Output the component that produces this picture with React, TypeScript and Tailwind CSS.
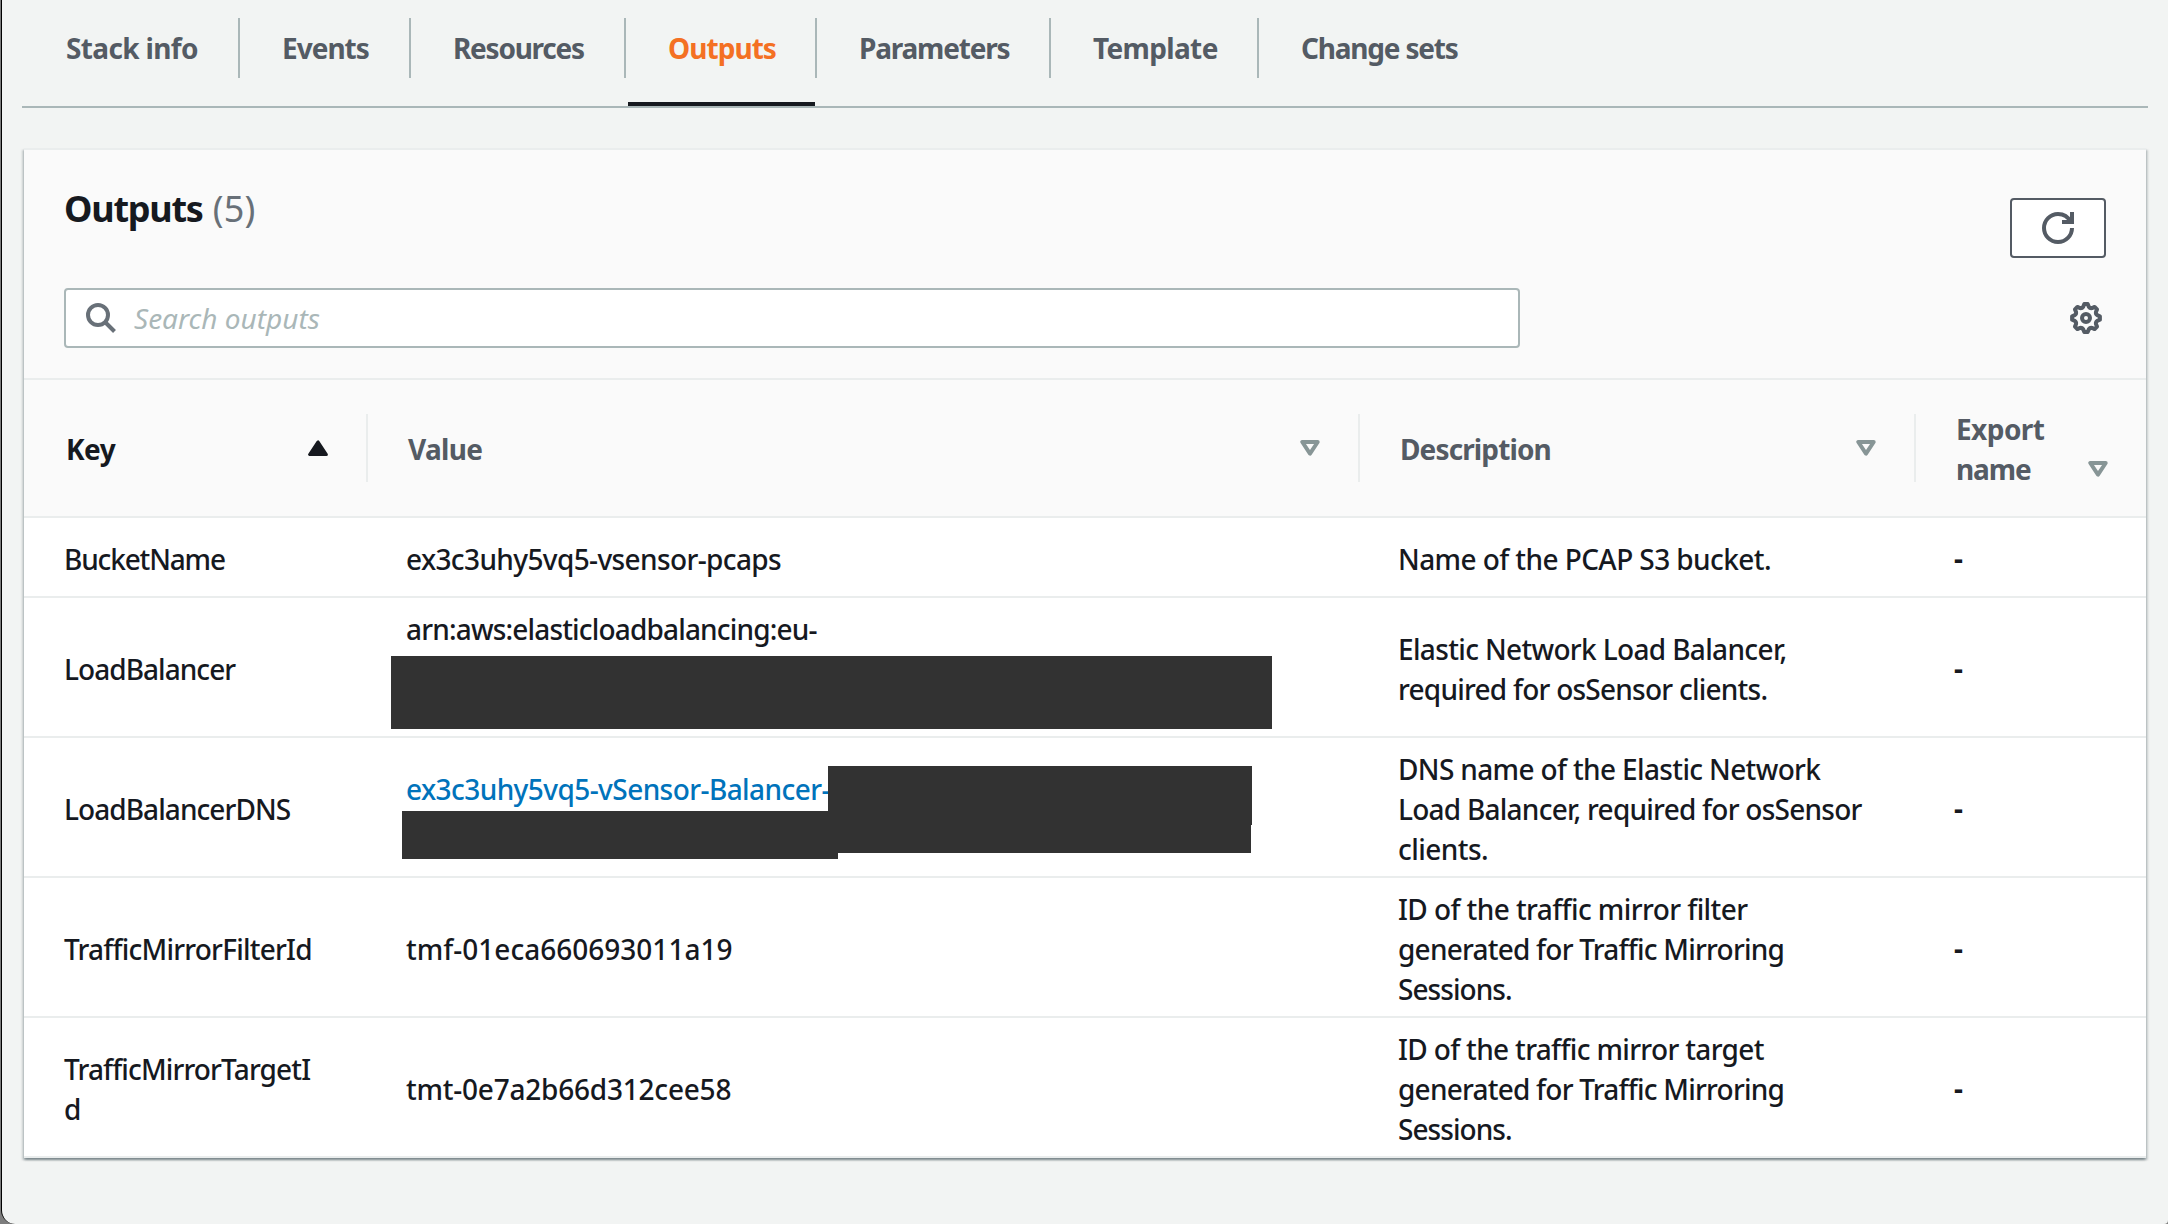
import type { ReactNode } from "react";

type Line = { text: string; track: string };

const tabs = [
  { label: "Stack info", box: "w-[218px] pl-[44px]", track: "tracking-[-0.65px]" },
  { label: "Events", box: "w-[171px] pl-[42px]", track: "tracking-[-1px]" },
  { label: "Resources", box: "w-[215px] pl-[42px]", track: "tracking-[-1.25px]" },
  { label: "Outputs", box: "w-[191px] pl-[42px]", track: "tracking-[-0.95px]", active: true },
  { label: "Parameters", box: "w-[234px] pl-[42px]", track: "tracking-[-1.2px]" },
  { label: "Template", box: "w-[208px] pl-[42px]", track: "tracking-[-0.65px]" },
  { label: "Change sets", box: "w-[240px] pl-[42px]", track: "tracking-[-1.2px]", last: true },
];

const rows: { key: Line[]; value: ReactNode; description: Line[]; height: string }[] = [
  {
    key: [{ text: "BucketName", track: "tracking-[-1.15px]" }],
    value: <Text line={{ text: "ex3c3uhy5vq5-vsensor-pcaps", track: "tracking-[-0.62px]" }} />,
    description: [{ text: "Name of the PCAP S3 bucket.", track: "tracking-[-0.58px]" }],
    height: "h-[80px]",
  },
  {
    key: [{ text: "LoadBalancer", track: "tracking-[-0.95px]" }],
    value: (
      <div className="relative h-[120px]">
        <Text line={{ text: "arn:aws:elasticloadbalancing:eu-", track: "tracking-[-0.83px]" }} />
        <div className="absolute left-[-15px] top-[47px] h-[73px] w-[881px] bg-[#323232]" />
      </div>
    ),
    description: [
      { text: "Elastic Network Load Balancer,", track: "tracking-[-0.65px]" },
      { text: "required for osSensor clients.", track: "tracking-[-0.76px]" },
    ],
    height: "h-[140px]",
  },
  {
    key: [{ text: "LoadBalancerDNS", track: "tracking-[-0.93px]" }],
    value: (
      <div className="relative h-[80px] text-[#0073bb]">
        <Text line={{ text: "ex3c3uhy5vq5-vSensor-Balancer-", track: "tracking-[-0.57px]" }} />
        <div className="absolute left-[422px] top-[-3px] h-[59px] w-[424px] bg-[#323232]" />
        <div className="absolute left-[422px] top-[55px] h-[29px] w-[423px] bg-[#323232]" />
        <div className="absolute left-[-4px] top-[42px] h-[48px] w-[436px] bg-[#323232]" />
      </div>
    ),
    description: [
      { text: "DNS name of the Elastic Network", track: "tracking-[-0.64px]" },
      { text: "Load Balancer, required for osSensor", track: "tracking-[-0.75px]" },
      { text: "clients.", track: "tracking-[-0.55px]" },
    ],
    height: "h-[140px]",
  },
  {
    key: [{ text: "TrafficMirrorFilterId", track: "tracking-[-0.78px]" }],
    value: <Text line={{ text: "tmf-01eca660693011a19", track: "tracking-[0.01px]" }} />,
    description: [
      { text: "ID of the traffic mirror filter", track: "tracking-[-0.58px]" },
      { text: "generated for Traffic Mirroring", track: "tracking-[-0.77px]" },
      { text: "Sessions.", track: "tracking-[-0.95px]" },
    ],
    height: "h-[140px]",
  },
  {
    key: [
      { text: "TrafficMirrorTargetI", track: "tracking-[-0.86px]" },
      { text: "d", track: "tracking-normal" },
    ],
    value: <Text line={{ text: "tmt-0e7a2b66d312cee58", track: "tracking-[-0.22px]" }} />,
    description: [
      { text: "ID of the traffic mirror target", track: "tracking-[-0.66px]" },
      { text: "generated for Traffic Mirroring", track: "tracking-[-0.77px]" },
      { text: "Sessions.", track: "tracking-[-0.95px]" },
    ],
    height: "h-[140px]",
  },
];

function Text({ line }: { line: Line }) {
  return <div className={`whitespace-nowrap leading-[40px] ${line.track}`}>{line.text}</div>;
}

function SortDown() {
  return (
    <svg className="h-4 w-5 shrink-0" viewBox="0 0 20 16" fill="none" stroke="#879596" strokeWidth="4" strokeLinejoin="round">
      <path d="M2.3 2h15.4L10 13.6z" />
    </svg>
  );
}

function SortUp() {
  return (
    <svg className="h-4 w-5 shrink-0" viewBox="0 0 20 16" fill="#16191f" stroke="#16191f" strokeWidth="3" strokeLinejoin="round">
      <path d="M1.6 14.5h16.8L10 1.9z" />
    </svg>
  );
}

const gear = Array.from({ length: 8 }, (_, i) => {
  const at = (r: number, deg: number) => {
    const a = ((i * 45 + deg - 90) * Math.PI) / 180;
    return `${(8 + r * Math.cos(a)).toFixed(2)} ${(8 + r * Math.sin(a)).toFixed(2)}`;
  };
  return `${i ? "L" : "M"}${at(7, -7)}L${at(7, 7)}L${at(5.8, 14)}Q${at(5.2, 22.5)} ${at(5.8, 31)}`;
}).join("");

export default function App() {
  return (
    <div className="flex h-[1224px] w-[2168px] overflow-hidden bg-[#7d7d7d] font-['Noto_Sans','Open_Sans',sans-serif] text-[28px] font-medium text-[#16191f]">
      <div className="ml-px h-full flex-1 rounded-bl-[14px] rounded-br-[4px] border-l border-black bg-[#f2f4f3] pl-5 pr-5">
        <nav className="flex h-[108px] border-b-2 border-[#aab7b8] pt-[18px] font-bold text-[#545b64]">
          {tabs.map((t) => (
            <div
              key={t.label}
              className={`relative flex h-[60px] items-center whitespace-nowrap leading-[40px] ${t.box} ${t.track} ${t.last ? "" : "border-r-2 border-[#aab7b8]"}`}
            >
              {t.active && <span className="absolute left-[2px] right-0 top-[84px] h-1 bg-[#16191f]" />}
              <span className={t.active ? "text-[#f47023]" : ""}>{t.label}</span>
            </div>
          ))}
        </nav>

        <section className="ml-[2px] mt-[40px] h-[1010px] w-[2122px] border-t-2 border-[#eaeded] bg-white shadow-[0_2px_2px_0_rgba(0,28,36,0.3),2px_2px_2px_0_rgba(0,28,36,0.15),-2px_2px_2px_0_rgba(0,28,36,0.15)]">
          <div className="flex h-[230px] flex-col border-b-2 border-[#eaeded] bg-[#fafafa] pl-10 pr-[40px]">
            <div className="flex items-start justify-between pt-[31px]">
              <h1 className="h-[75px] whitespace-nowrap text-[36px] leading-[56px] tracking-[-1.25px]">
                <span className="font-bold">Outputs</span>{" "}
                <span className="ml-[2px] font-normal tracking-[0.2px] text-[#687078]">(5)</span>
              </h1>
              <button className="mt-[17px] flex h-[60px] w-[96px] items-center justify-center rounded-[4px] border-2 border-[#545b64] bg-white">
                <svg className="size-8" viewBox="0 0 16 16" fill="none" stroke="#545b64" strokeWidth="2">
                  <path d="M10 5h5V0" />
                  <path d="M15 8c0 3.87-3.13 7-7 7s-7-3.13-7-7 3.13-7 7-7c2.79 0 5.2 1.63 6.33 4" />
                </svg>
              </button>
            </div>
            <div className="mt-[30px] flex items-center justify-between">
              <div className="flex h-[60px] w-[1456px] items-center rounded-[4px] border-2 border-[#aab7b8] bg-white pl-5">
                <svg className="size-8" viewBox="0 0 32 32" fill="none" stroke="#687078" strokeWidth="4">
                  <circle cx="12" cy="13" r="10" />
                  <path d="M19 20l9.5 9.5" />
                </svg>
                <span className="ml-4 whitespace-nowrap pb-px font-normal italic leading-[40px] text-[#aab7b8]">Search outputs</span>
              </div>
              <svg className="mr-1 size-8" viewBox="0 0 16 16" fill="none" stroke="#545b64" strokeWidth="2" strokeLinejoin="round">
                <path d={`${gear}Z`} />
                <circle cx="8" cy="8" r="2" />
              </svg>
            </div>
          </div>

          <div className="flex h-[138px] items-center border-b-2 border-[#eaeded] bg-[#fafafa] font-bold leading-[40px] text-[#545b64]">
            <div className="flex h-[68px] w-[344px] items-center justify-between border-r-2 border-[#eaeded] pl-[42px] pr-[38px]">
              <span className="pt-px tracking-[-0.5px] text-[#16191f]">Key</span>
              <SortUp />
            </div>
            <div className="flex h-[68px] w-[992px] items-center justify-between border-r-2 border-[#eaeded] pl-[40px] pr-[38px]">
              <span className="pt-px tracking-[-0.7px]">Value</span>
              <SortDown />
            </div>
            <div className="flex h-[68px] w-[556px] items-center justify-between border-r-2 border-[#eaeded] pl-[40px] pr-[38px]">
              <span className="pt-px tracking-[-0.88px]">Description</span>
              <SortDown />
            </div>
            <div className="flex flex-1 items-end justify-between pl-[40px] pr-[38px] pt-px">
              <span className="tracking-[-0.56px]">
                Export
                <br />
                <span className="tracking-[-1.1px]">name</span>
              </span>
              <div className="flex h-[28px] items-start">
                <SortDown />
              </div>
            </div>
          </div>

          {rows.map((r) => (
            <div key={r.key[0].text} className={`flex items-center border-b-2 border-[#eaeded] pt-[4px] ${r.height}`}>
              <div className="w-[344px] pl-[40px]">
                {r.key.map((l) => (
                  <Text key={l.text} line={l} />
                ))}
              </div>
              <div className="w-[992px] pl-[38px]">{r.value}</div>
              <div className="w-[556px] pl-[38px]">
                {r.description.map((l) => (
                  <Text key={l.text} line={l} />
                ))}
              </div>
              <div className="flex-1 pb-[2px] pl-[38px] font-bold leading-[40px]">-</div>
            </div>
          ))}
        </section>
      </div>
    </div>
  );
}
